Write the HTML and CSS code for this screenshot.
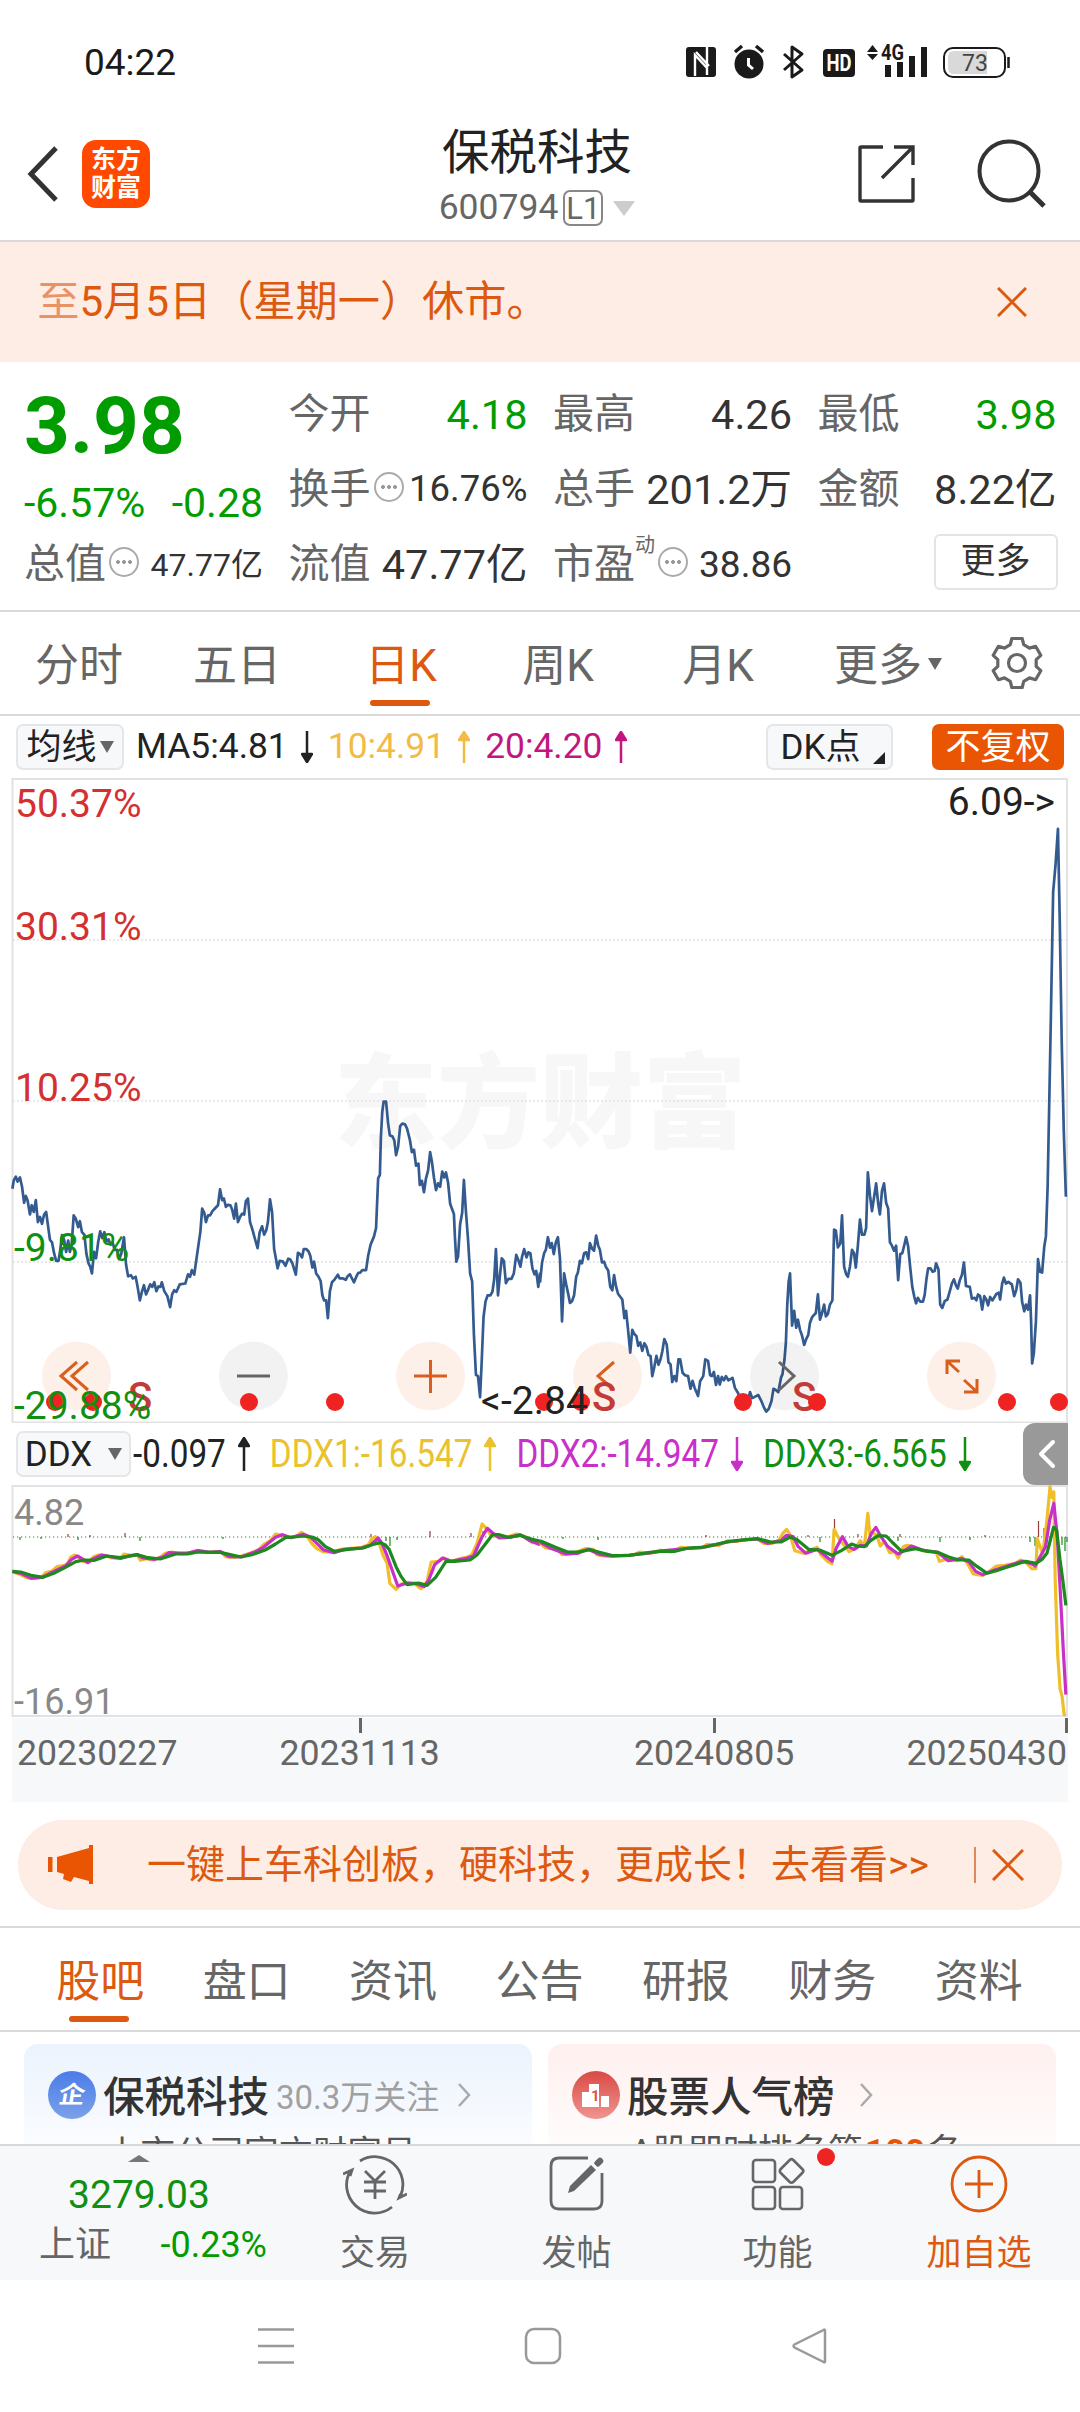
FILE: index.html
```html
<!DOCTYPE html>
<html lang="zh-CN">
<head>
  <meta charset="UTF-8">
  <title>保税科技 600794</title>
  <meta name="viewport" content="width=device-width, initial-scale=1.0">
  <link rel="stylesheet" href="styles.css">
</head>
<body>
  <!-- Status bar -->
  <div class="status-bar">
    <span class="clock">04:22</span>
    <svg class="status-icons" viewBox="670 35 350 60" width="350" height="60">
      <rect x="686" y="47" width="30" height="30" rx="3" fill="#1a1a1a"/>
      <path d="M695 76V55L707 68V75M696 52L709 66M707 47V70" fill="none" stroke="#fff" stroke-width="2.4"/>
      <circle cx="749" cy="64" r="14.5" fill="#1a1a1a"/>
      <path d="M735 52L742 46M756 46L763 52" stroke="#1a1a1a" stroke-width="3.4" fill="none"/>
      <path d="M748.500 58V65L753 69" stroke="#fff" stroke-width="3" fill="none"/>
      <path d="M784 54L802 70L792 77V47L802 54L784 70" stroke="#1a1a1a" stroke-width="3" fill="none" stroke-linejoin="round"/>
      <rect x="823" y="49" width="32" height="28" rx="4" fill="#1a1a1a"/>
      <text x="839" y="71" class="hd" textLength="25" lengthAdjust="spacingAndGlyphs">HD</text>
      <path d="M867 52L872.500 45L878 52ZM867 54L872.500 60L878 54Z" fill="#1a1a1a"/>
      <text x="881" y="60" class="net" textLength="23" lengthAdjust="spacingAndGlyphs">4G</text>
      <path d="M888 65V77M900 62V77M912 56V77M924 47V77" stroke="#1a1a1a" stroke-width="6"/>
      <rect x="944" y="48" width="61" height="29" rx="9" fill="#fff" stroke="#1a1a1a" stroke-width="2"/>
      <path d="M954 51H987V74H954Q948 74 948 68V57Q948 51 954 51Z" fill="#d9d9d9"/>
      <path d="M1008.500 57V68" stroke="#1a1a1a" stroke-width="2.500"/>
      <text x="975" y="71" class="batt">73</text>
    </svg>
  </div>

  <!-- Title bar -->
  <header class="title-bar">
    <svg class="back" viewBox="0 0 34 60" width="34" height="60"><path d="M30 4L5 30L30 56" fill="none" stroke="#333" stroke-width="5"/></svg>
    <div class="app-logo"><span>东方</span><span>财富</span></div>
    <div class="stock">
      <div class="stock-name">保税科技</div>
      <div class="stock-code">600794<span class="level">L1</span><i class="tri-down light"></i></div>
    </div>
    <svg class="share" viewBox="0 0 62 62" width="62" height="62">
      <path d="M27 4H5Q4 4 4 5V57Q4 58 5 58H56Q57 58 57 57V35M38 4H57V22M57 4L26 35" fill="none" stroke="#333" stroke-width="3.400"/>
    </svg>
    <svg class="search" viewBox="0 0 72 72" width="72" height="72">
      <circle cx="33" cy="33" r="29.500" fill="none" stroke="#333" stroke-width="4"/>
      <path d="M54 54L68 68" stroke="#333" stroke-width="5"/>
    </svg>
  </header>

  <!-- Scrolling notice -->
  <div class="notice">
    <span class="notice-text"><span class="faded">）</span><span class="fade-in">至</span>5月5日（星期一）休市。</span>
    <svg viewBox="0 0 30 30" width="30" height="30"><path d="M1 1L29 29M29 1L1 29" stroke="#dd5910" stroke-width="3"/></svg>
  </div>

  <!-- Quote -->
  <section class="quote">
    <div class="last">
      <b>3.98</b>
      <div class="change"><span>-6.57%</span><span>-0.28</span></div>
    </div>
    <div class="cell"><label>今开</label><span class="down">4.18</span></div>
    <div class="cell"><label>最高</label><span>4.26</span></div>
    <div class="cell"><label>最低</label><span class="down">3.98</span></div>
    <div class="cell"><label>换手</label><i class="tip"></i><span class="mid">16.76%</span></div>
    <div class="cell"><label>总手</label><span>201.2万</span></div>
    <div class="cell"><label>金额</label><span>8.22亿</span></div>
    <div class="cell"><label>总值</label><i class="tip"></i><span class="small">47.77亿</span></div>
    <div class="cell"><label>流值</label><span>47.77亿</span></div>
    <div class="cell"><label>市盈</label><sup>动</sup><i class="tip"></i><span class="pe">38.86</span></div>
    <div class="cell last-cell"><button class="more">更多</button></div>
  </section>

  <!-- Period tabs -->
  <nav class="period-tabs">
    <a>分时</a>
    <a>五日</a>
    <a class="active">日K</a>
    <a>周K</a>
    <a>月K</a>
    <a>更多<i class="tri-down"></i></a>
    <a class="settings">
      <svg viewBox="-27 -27 54 54" width="54" height="54">
        <path d="M-6.700 -18.300L-5.200 -24.500H5.200L6.700 -18.300L12.500 -14.900L18.600 -16.700L23.800 -7.700L19.200 -3.400V3.400L23.800 7.700L18.600 16.700L12.500 14.900L6.700 18.300L5.200 24.500H-5.200L-6.700 18.300L-12.500 14.900L-18.600 16.700L-23.800 7.700L-19.200 3.400V-3.400L-23.800 -7.700L-18.600 -16.700L-12.500 -14.900Z" fill="none" stroke="#666" stroke-width="3.200" stroke-linejoin="round"/>
        <circle r="8.500" fill="none" stroke="#666" stroke-width="3.200"/>
      </svg>
    </a>
  </nav>

  <!-- Moving averages -->
  <div class="ma-row">
    <span class="pill">均线<i class="tri-down"></i></span>
    <span class="ma ma5">MA5:4.81<svg class="arrow flip" viewBox="0 0 12 32" width="12" height="32"><path d="M6 3V32M1 9L6 1L11 9Z"/></svg></span>
    <span class="ma ma10">10:4.91<svg class="arrow" viewBox="0 0 12 32" width="12" height="32"><path d="M6 3V32M1 9L6 1L11 9Z"/></svg></span>
    <span class="ma ma20">20:4.20<svg class="arrow" viewBox="0 0 12 32" width="12" height="32"><path d="M6 3V32M1 9L6 1L11 9Z"/></svg></span>
    <span class="pill dk">DK点<i class="corner"></i></span>
    <span class="pill adjust">不复权</span>
  </div>

  <!-- Price chart -->
  <svg class="price-chart" viewBox="0 778 1080 645" width="1080" height="645">
    <text x="334" y="1140" class="watermark" textLength="412">东方财富</text>
    <path d="M12.500 1422.500V779H1067V1422.500Z" class="frame"/>
    <path d="M13 940H1067M13 1101H1067M13 1262H1067" class="grid"/>
    <g transform="translate(0 770) scale(.34439 .42092)" class="line price">
      <polyline points="36,995 40,975 46,966 51,978 58,968 64,990 70,1028 75,1012 80,1022 87,1056 92,1034 98,1050 104,1022 110,1074 116,1062 122,1078 128,1056 134,1050 139,1080 145,1116 151,1122 157,1148 163,1166 170,1166 175,1140 180,1105 186,1116 192,1145 198,1118 203,1145 208,1128 214,1058 220,1066 227,1086 232,1072 238,1098 245,1104 251,1150 257,1172 262,1180 267,1196 273,1145 279,1160 285,1122 291,1096 297,1112 303,1098 309,1120 315,1115 321,1128 327,1122 333,1140 340,1140 346,1162 352,1150 360,1110 366,1175 372,1203 380,1200 386,1208 394,1204 400,1230 406,1260 412,1240 418,1224 424,1246 430,1235 436,1222 442,1228 448,1217 454,1238 460,1227 466,1228 470,1217 477,1238 486,1250 494,1276 500,1245 506,1236 512,1240 522,1222 538,1220 546,1198 552,1204 557,1188 564,1199 570,1164 576,1130 582,1096 587,1042 593,1052 598,1074 604,1058 610,1058 617,1048 626,1040 633,1034 639,996 645,1022 650,1018 656,1038 662,1033 669,1034 674,1044 680,1066 685,1030 691,1074 697,1062 703,1054 709,1056 714,1024 720,1018 726,1074 733,1092 741,1116 748,1136 754,1098 761,1084 767,1104 773,1094 778,1074 784,1020 790,1050 796,1138 801,1160 806,1184 812,1166 821,1167 829,1178 837,1161 843,1163 849,1172 859,1199 865,1147 870,1149 877,1158 882,1138 889,1138 896,1144 901,1154 907,1182 912,1168 918,1196 925,1204 931,1214 936,1248 941,1260 947,1260 952,1302 958,1238 964,1217 972,1210 981,1199 986,1208 996,1208 1004,1211 1010,1202 1016,1198 1022,1208 1028,1217 1034,1205 1040,1195 1046,1194 1052,1188 1063,1188 1069,1154 1076,1128 1086,1108 1092,1088 1098,970 1103,962 1106,872 1110,812 1114,788 1121,788 1127,840 1132,868 1139,870 1145,880 1150,915 1156,895 1162,846 1168,840 1176,842 1182,852 1190,878 1196,908 1202,902 1208,940 1215,935 1219,986 1225,976 1231,1003 1237,970 1243,952 1249,908 1254,930 1260,968 1266,998 1272,982 1278,990 1284,954 1290,968 1295,956 1301,980 1307,1030 1312,1042 1318,1055 1321,1110 1325,1168 1330,1156 1336,1080 1342,1052 1347,974 1353,1050 1359,1115 1365,1196 1371,1215 1376,1340 1382,1437 1388,1440 1394,1490 1399,1400 1404,1300 1410,1262 1416,1248 1424,1248 1430,1239 1435,1210 1440,1138 1446,1248 1452,1198 1457,1160 1463,1166 1469,1219 1476,1209 1485,1209 1492,1196 1499,1152 1505,1164 1511,1180 1516,1156 1522,1138 1529,1158 1534,1146 1540,1148 1546,1184 1552,1198 1557,1190 1563,1228 1568,1194"/>
    </g>
    <g transform="translate(540 770) scale(.34439 .42092)" class="line price">
      <polyline points="0,1218 6,1170 12,1148 17,1140 23,1110 29,1135 34,1124 40,1150 46,1122 52,1110 58,1160 64,1310 70,1196 76,1222 82,1245 87,1266 93,1262 99,1248 105,1204 110,1194 116,1166 122,1172 128,1148 134,1146 140,1162 145,1124 151,1137 157,1142 163,1106 169,1130 174,1140 180,1170 186,1168 191,1180 198,1189 204,1228 210,1236 215,1200 221,1228 227,1245 239,1258 245,1302 250,1285 255,1324 262,1384 268,1330 274,1340 280,1345 285,1368 291,1360 297,1380 303,1362 309,1370 315,1390 321,1392 326,1440 332,1418 338,1392 344,1413 350,1400 355,1382 361,1352 368,1365 373,1407 379,1412 384,1454 390,1440 396,1452 402,1400 407,1400 414,1432 421,1438 430,1440 437,1470 443,1451 449,1468 459,1487 465,1452 474,1440 480,1400 488,1404 494,1438 499,1440 505,1430 511,1461 517,1440 522,1460 528,1442 534,1450 540,1440 547,1450 559,1444 566,1468 575,1480 582,1495 590,1500 597,1510 603,1500 610,1478 616,1492 622,1490 634,1485 642,1498 650,1514 657,1524 664,1518 672,1500 678,1470 686,1474 692,1478 700,1443 704,1436 710,1400 714,1360 718,1270 722,1215 726,1196 732,1320 738,1285 744,1325 749,1306 755,1330 761,1344 767,1366 773,1352 779,1342 784,1313 790,1300 801,1290 807,1246 813,1306 819,1290 825,1270 830,1298 836,1292 842,1270 849,1260 854,1092 859,1094 865,1134 872,1125 877,1058 883,1180 889,1198 894,1204 900,1180 906,1140 912,1148 917,1182 923,1130 929,1068 935,1104 942,1104 947,1088 952,956 958,1010 964,1048 970,1015 976,982 982,1030 987,1056 993,1000 999,982 1005,1028 1011,1042 1016,1122 1022,1130 1028,1142 1034,1130 1040,1212 1046,1150 1052,1148 1058,1128 1063,1110 1069,1132 1075,1182 1081,1228 1087,1252 1092,1267 1097,1254 1104,1263 1112,1263 1117,1247 1122,1210 1127,1184 1134,1184 1140,1192 1146,1190 1150,1172 1157,1186 1162,1270 1168,1278 1175,1262 1183,1258 1190,1238 1196,1220 1202,1210 1208,1225 1213,1232 1219,1212 1225,1200 1231,1170 1237,1226 1248,1228 1254,1256 1262,1254 1267,1260 1272,1246 1278,1250 1284,1282 1290,1250 1296,1258 1301,1272 1307,1252 1314,1260 1325,1245 1332,1242 1336,1258 1342,1220 1347,1206 1353,1220 1360,1216 1370,1222 1377,1250 1383,1235 1388,1210 1395,1218 1400,1264 1406,1286 1411,1270 1417,1282 1423,1248 1426,1310 1429,1410 1434,1385 1440,1310 1446,1162 1452,1192 1458,1194 1464,1134 1469,1108 1474,990 1482,650 1490,290 1497,225 1504,140 1509,350 1515,650 1521,860 1527,1014"/>
    </g>
    <!-- Toolbar buttons -->
    <g class="tool">
      <circle cx="76.500" cy="1376" r="34.500"/><path d="M77 1362L61 1376L77 1390M88 1362L72 1376L88 1390"/>
      <circle cx="430.500" cy="1376" r="34.500"/><path d="M414 1376H447M430.500 1360V1393"/>
      <circle cx="607.500" cy="1376" r="34.500"/><path d="M614 1362L598 1376L614 1390"/>
      <circle cx="961.500" cy="1376" r="34.500"/><path d="M960 1361H947V1374M947 1361L959 1372M964 1380L977 1392M964 1392H977V1379"/>
    </g>
    <g class="tool gray">
      <circle cx="253.500" cy="1376" r="34.500"/><path d="M237 1376H270"/>
      <circle cx="784.500" cy="1376" r="34.500"/><path d="M779 1362L794 1376L779 1390"/>
    </g>
    <!-- Event markers -->
    <g class="mark">
      <text x="128" y="1411">S</text><text x="592" y="1411">S</text><text x="792" y="1411">S</text>
      <circle cx="55" cy="1402" r="9"/><circle cx="93" cy="1402" r="9"/><circle cx="249" cy="1402" r="9"/><circle cx="335" cy="1402" r="9"/>
      <circle cx="544" cy="1402" r="9"/><circle cx="581" cy="1402" r="9"/><circle cx="743" cy="1402" r="9"/><circle cx="817" cy="1402" r="9"/>
      <circle cx="1007" cy="1402" r="9"/><circle cx="1059" cy="1402" r="9"/>
    </g>
    <g class="axis">
      <text x="15" y="817" class="up">50.37%</text>
      <text x="15" y="940" class="up">30.31%</text>
      <text x="15" y="1101" class="up">10.25%</text>
      <text x="14" y="1261" class="dn">-9.81%</text>
      <text x="14" y="1419" class="dn">-29.88%</text>
      <text x="1055" y="815" text-anchor="end">6.09-&gt;</text>
      <text x="481" y="1414" textLength="107">&lt;-2.84</text>
    </g>
  </svg>

  <!-- DDX row -->
  <div class="ddx-row">
    <span class="pill">DDX<i class="tri-down"></i></span>
    <span class="ddx v0"><em>-0.097</em><svg class="arrow" viewBox="0 0 12 34" width="12" height="34"><path d="M6 3V34M1 9L6 1L11 9Z"/></svg></span>
    <span class="ddx v1"><em>DDX1:-16.547</em><svg class="arrow" viewBox="0 0 12 34" width="12" height="34"><path d="M6 3V34M1 9L6 1L11 9Z"/></svg></span>
    <span class="ddx v2"><em>DDX2:-14.947</em><svg class="arrow flip" viewBox="0 0 12 34" width="12" height="34"><path d="M6 3V34M1 9L6 1L11 9Z"/></svg></span>
    <span class="ddx v3"><em>DDX3:-6.565</em><svg class="arrow flip" viewBox="0 0 12 34" width="12" height="34"><path d="M6 3V34M1 9L6 1L11 9Z"/></svg></span>
    <span class="drawer"><svg viewBox="0 0 18 30" width="18" height="30"><path d="M15 3L3 15L15 27" fill="none" stroke="#fff" stroke-width="4" stroke-linecap="round" stroke-linejoin="round"/></svg></span>
  </div>

  <!-- DDX chart -->
  <svg class="ddx-chart" viewBox="0 1485 1080 233" width="1080" height="233">
    <path d="M12.500 1716V1486H1067V1716Z" class="frame"/>
    <path d="M13 1537H1067" stroke="#1c8a1c" stroke-width="1.200" stroke-dasharray="1.200 2.800"/>
    <path d="M20 1537v3M41 1537v2M78 1537v3M140 1537v4M223 1537v2M390 1537v9M386 1537v4M397 1537v3M563 1537v2M598 1537v3M820 1537v5M898 1537v4M940 1537v5M970 1537v3M1030 1537v5M1035 1537v9M1058 1537v6M1062 1537v8M1065 1537v14M1067 1537v5" stroke="#1c8a1c" stroke-width="1.200"/>
    <path d="M68 1537v-3M125 1537v-4M90 1537v-2M371 1537v-3M430 1537v-6M471 1537v-4M483 1537v-6M706 1537v-2M808 1537v-2M858 1537v-3M834.500 1537v-18M900 1537v-3M985 1537v-2M1038.500 1537v-16M1044 1537v-9" stroke="#93403a" stroke-width="1.200"/>
    <g transform="translate(0 1420) scale(.34439 .33333)" class="line">
      <polyline class="c1" points="36,455 55,462 80,474 105,474 122,470 133,458 150,454 165,440 185,437 196,432 205,412 216,405 228,412 240,424 255,426 270,412 285,405 305,406 325,414 350,415 360,402 380,406 398,404 408,421 425,416 445,420 465,412 480,400 500,396 530,402 560,396 575,391 600,398 640,394 655,410 680,412 700,408 725,400 750,390 765,374 785,362 800,342 820,346 840,352 862,348 875,337 890,346 905,370 920,386 940,396 965,396 990,388 1020,385 1050,382 1070,374 1080,356 1090,350 1100,366 1112,405 1124,430 1132,490 1150,508 1165,492 1185,487 1205,492 1222,506 1240,485 1252,426 1275,424 1288,414 1310,424 1335,416 1355,412 1370,404 1385,370 1400,312 1412,325 1425,345 1450,352 1475,350 1500,342 1520,348 1545,368 1568,368"/>
      <polyline class="c2" points="36,454 60,460 90,475 122,472 150,457 190,438 208,418 225,408 238,416 255,428 272,416 295,405 325,411 350,415 375,408 398,404 415,414 450,418 475,410 490,398 515,399 545,399 575,392 610,397 640,395 665,410 700,411 740,396 765,382 800,352 820,344 845,353 880,343 900,350 920,370 940,390 970,398 1000,388 1050,384 1075,376 1098,354 1110,372 1125,410 1155,498 1180,490 1205,490 1232,500 1245,480 1262,434 1285,414 1310,424 1350,416 1375,408 1400,350 1415,325 1430,338 1450,354 1480,352 1510,344 1535,360 1568,374"/>
      <polyline class="c3" points="36,454 60,456 90,466 125,472 160,458 190,442 220,425 245,420 275,421 310,408 350,413 400,404 425,412 465,417 510,402 545,402 575,396 640,397 700,411 735,403 770,390 800,372 830,352 855,351 880,348 910,352 925,360 945,380 972,394 1010,388 1055,384 1080,374 1104,368 1118,374 1130,388 1150,440 1165,470 1182,494 1215,489 1240,496 1265,472 1295,424 1320,424 1365,420 1385,405 1405,378 1430,344 1450,344 1475,352 1510,346 1545,358 1568,363"/>
    </g>
    <g transform="translate(540 1420) scale(.34439 .33333)" class="line">
      <polyline class="c1" points="0,368 15,384 35,386 55,392 64,404 85,402 105,397 130,386 155,388 165,404 200,410 240,408 270,405 290,396 320,400 350,390 380,396 410,382 440,386 470,384 485,373 520,376 545,362 570,364 600,358 630,356 650,370 675,370 695,360 705,340 716,328 726,344 740,392 765,400 790,388 805,382 815,404 835,424 848,432 854,328 864,348 872,362 885,378 898,395 915,386 930,362 942,378 952,280 958,345 968,340 978,346 988,378 1000,364 1015,398 1030,395 1040,414 1055,380 1065,376 1085,380 1110,392 1150,396 1160,424 1185,416 1210,422 1225,410 1240,428 1258,462 1285,466 1305,454 1325,438 1350,436 1380,430 1395,420 1410,425 1428,446 1440,446 1444,356 1452,380 1460,400 1472,300 1481,200 1486,232 1492,216 1496,480 1503,700 1510,805 1516,830 1522,884 1527,884"/>
      <polyline class="c2" points="0,366 30,384 75,402 110,400 140,388 175,404 210,408 260,405 310,400 360,392 410,387 470,382 510,374 545,366 590,360 632,357 660,370 700,362 715,346 735,350 750,380 772,400 805,388 825,405 848,424 860,385 878,350 895,380 912,388 930,376 948,378 962,340 975,322 990,350 1010,380 1040,402 1060,390 1078,378 1110,390 1155,397 1185,422 1225,416 1245,425 1265,454 1285,464 1320,450 1350,440 1400,424 1425,430 1438,438 1455,405 1468,380 1480,300 1492,250 1502,350 1511,520 1520,700 1527,824"/>
      <polyline class="c3" points="0,362 45,382 80,396 110,396 145,389 170,396 210,407 260,406 320,397 350,394 390,394 430,384 480,381 540,366 570,362 632,356 670,366 700,366 725,352 745,358 780,388 812,390 848,406 875,392 905,372 920,378 942,380 960,362 982,347 1005,348 1022,366 1050,394 1090,386 1125,394 1155,397 1185,410 1215,420 1245,420 1270,440 1298,460 1325,452 1355,442 1410,424 1440,430 1458,418 1472,400 1482,360 1491,322 1500,330 1510,420 1518,480 1527,556"/>
    </g>
    <g class="ddx-axis">
      <text x="14" y="1525">4.82</text>
      <text x="14" y="1714">-16.91</text>
    </g>
  </svg>

  <div class="dates">
    <span>20230227</span>
    <span class="tick">20231113</span>
    <span class="tick">20240805</span>
    <span class="tick end">20250430</span>
  </div>

  <!-- Promo -->
  <div class="promo">
    <svg viewBox="0 0 46 40" width="46" height="40">
      <path d="M1 12H5.500V27H1ZM10 12L42 3V0H46V39H42V36L27 32L24 37L16 34L17 29L10 27Z" fill="#ea5504"/>
    </svg>
    <span class="promo-text">一键上车科创板，硬科技，更成长！去看看&gt;&gt;</span>
    <i class="bar"></i>
    <svg viewBox="0 0 32 32" width="32" height="32"><path d="M1 1L31 31M31 1L1 31" stroke="#dd5910" stroke-width="3"/></svg>
  </div>

  <!-- Info tabs -->
  <nav class="info-tabs">
    <a class="active">股吧</a>
    <a>盘口</a>
    <a>资讯</a>
    <a>公告</a>
    <a>研报</a>
    <a>财务</a>
    <a>资料</a>
  </nav>

  <section class="cards">
    <div class="card blue">
      <div class="card-head">
        <span class="badge"><em>企</em></span>
        <b>保税科技</b>
        <small>30.3万关注</small>
        <svg viewBox="0 0 14 26" width="14" height="26"><path d="M2 2L12 13L2 24" fill="none" stroke="#aaa" stroke-width="2.500"/></svg>
      </div>
      <p>上市公司官方财富号</p>
    </div>
    <div class="card red">
      <div class="card-head">
        <span class="badge">
          <svg viewBox="0 0 30 26" width="30" height="26"><path d="M1 25V10H8V2H18V25ZM20 25V14H28V25Z" fill="#fff"/><text x="10" y="19">1</text></svg>
        </span>
        <b>股票人气榜</b>
        <svg viewBox="0 0 14 26" width="14" height="26"><path d="M2 2L12 13L2 24" fill="none" stroke="#aaa" stroke-width="2.500"/></svg>
      </div>
      <p>A股即时排名第<strong>100</strong>名</p>
    </div>
  </section>

  <!-- Bottom bar -->
  <footer class="bottom-bar">
    <div class="index">
      <i class="tri-up"></i>
      <div class="index-value">3279.03</div>
      <div class="index-row"><span>上证</span><span class="down">-0.23%</span></div>
    </div>
    <div class="item">
      <svg viewBox="-32 -32 64 64" width="64" height="64" fill="none" stroke="#666" stroke-width="2.800">
        <path d="M-15 -23A28 28 0 0 1 25.500 12M25.500 10L24 14L32 10"/>
        <path d="M17 23A28 28 0 0 1 -24 -14M-32 -10L-23 -14L-25 -8"/>
        <path d="M-10 -13L0 -3L10 -13M-11 -2H11M-11 7H11M0 -3V15"/>
      </svg>
      <span>交易</span>
    </div>
    <div class="item">
      <svg viewBox="-32 -32 64 64" width="64" height="64">
        <path d="M11 -26H-18Q-26 -26 -26 -18V17Q-26 25 -18 25H17Q25 25 25 17V-11" fill="none" stroke="#666" stroke-width="2.800"/>
        <path d="M-9 9L-7 2L14 -19L19 -14L-3 7Z" fill="#666"/>
        <path d="M20.500 -20.500L23 -23" stroke="#666" stroke-width="6.500" stroke-linecap="round"/>
        <path d="M14 -22L21 -15" stroke="#f7f8fa" stroke-width="2"/>
      </svg>
      <span>发帖</span>
    </div>
    <div class="item">
      <svg viewBox="-32 -32 64 64" width="64" height="64" fill="none" stroke="#666" stroke-width="2.600">
        <rect x="-25" y="-24" width="22" height="22" rx="3"/>
        <rect x="-25" y="3" width="22" height="22" rx="3"/>
        <rect x="2" y="3" width="22" height="22" rx="3"/>
        <rect x="4.500" y="-22" width="18" height="18" rx="2.500" transform="rotate(45 13.500 -13)"/>
      </svg>
      <i class="dot"></i>
      <span>功能</span>
    </div>
    <div class="item add">
      <svg viewBox="-32 -32 64 64" width="64" height="64" fill="none" stroke="#dd5910" stroke-width="2.800">
        <circle r="27"/>
        <path d="M-14 0H14M0 -14V14"/>
      </svg>
      <span>加自选</span>
    </div>
  </footer>

  <!-- System navigation -->
  <div class="sys-nav">
    <svg viewBox="0 0 40 40" width="40" height="40"><path d="M2 3.500H38M2 20H38M2 36.500H38"/></svg>
    <svg viewBox="0 0 40 40" width="40" height="40"><rect x="3" y="3" width="34" height="34" rx="8"/></svg>
    <svg viewBox="0 0 40 40" width="40" height="40"><path d="M35 4.500V35.500Q35 37 33.500 36L4.500 21.500Q2.500 20 4.500 18.500L33.500 4Q35 3 35 4.500Z"/></svg>
  </div>
</body>
</html>
```
FILE: styles.css
```css
/* Base */
* { box-sizing: border-box; }
body {
  margin: 0;
  width: 1080px;
  height: 2412px;
  overflow: hidden;
  background: #fff;
  color: #333;
  font-family: Roboto, "Noto Sans CJK SC", sans-serif;
  font-size: 41.500px;
  line-height: 1;
}
svg { display: block; flex: none; }
i, em { font-style: normal; }
.down { color: #009c00; }

/* Small triangles */
.tri-down {
  display: inline-block;
  border: 7px solid transparent;
  border-top: 12px solid #666;
  border-bottom: 0;
}
.tri-down.light {
  border-width: 15px 11px 0;
  border-top-color: #ccc;
}
.tri-up {
  border: 11px solid transparent;
  border-bottom: 7px solid #777;
  border-top: 0;
}

/* Status bar */
.status-bar {
  height: 115px;
  padding: 35px 60px 0 84px;
  display: flex;
  justify-content: space-between;
}
.clock {
  font-size: 37px;
  line-height: 55px;
  color: #1a1a1a;
}
.hd {
  font: bold 23px Roboto;
  fill: #fff;
  text-anchor: middle;
}
.net { font: bold 22px Roboto; fill: #1a1a1a; }
.batt { font: 23px Roboto; fill: #444; text-anchor: middle; }

/* Title bar */
.title-bar {
  height: 127px;
  border-bottom: 2px solid #d9d9d9;
  display: flex;
  align-items: center;
  padding: 0 32px 7px 26px;
}
.app-logo {
  width: 68px;
  height: 68px;
  margin-left: 22px;
  border-radius: 14px;
  background: #ff4800;
  color: #fff;
  display: flex;
  flex-direction: column;
  align-items: center;
  justify-content: center;
  font-size: 25px;
  font-weight: 700;
  line-height: 28px;
}
.stock {
  flex: 1;
  margin-left: 68px;
  padding-top: 8px;
  text-align: center;
}
.stock-name {
  font-size: 47.500px;
  line-height: 60px;
  color: #222;
}
.stock-code {
  display: flex;
  align-items: center;
  justify-content: center;
  height: 50px;
  font-size: 35.500px;
  color: #666;
}
.level {
  width: 40px;
  height: 36px;
  margin: 0 10px 0 5px;
  border: 2px solid #888;
  border-radius: 7px;
  font-size: 31px;
  line-height: 33px;
}
.share { margin-right: 58px; }

/* Notice */
.notice {
  height: 120px;
  padding: 0 53px 0 0;
  background: #fdede4;
  color: #dd5910;
  display: flex;
  align-items: center;
  justify-content: space-between;
  font-size: 42.200px;
  overflow: hidden;
}
.faded { margin-left: -15px; margin-right: 10px; opacity: .25; }
.fade-in { opacity: .6; }

/* Quote grid */
.quote {
  height: 250px;
  padding: 15px 23px 0 24px;
  border-bottom: 2px solid #d9d9d9;
  display: grid;
  grid-template-columns: 239px 239px 239px 239px;
  grid-template-rows: 75px 75px 75px;
  column-gap: 25.500px;
}
.last {
  grid-row: span 2;
  color: #009c00;
}
.last b {
  display: block;
  font-size: 80px;
  font-weight: 700;
  line-height: 98px;
}
.change {
  display: flex;
  justify-content: space-between;
  font-size: 41px;
  line-height: 56px;
}
.cell {
  display: flex;
  align-items: center;
  position: relative;
}
.cell label { color: #666; white-space: nowrap; font-size: 41px; }
.cell span { margin-left: auto; white-space: nowrap; }
.cell .mid { font-size: 36.500px; }
.cell .small { font-size: 32px; }
.cell .pe { font-size: 37px; }
.cell sup {
  width: 20px;
  font-size: 20px;
  color: #666;
  align-self: flex-start;
  padding-top: 8px;
}
.tip {
  width: 30px;
  height: 30px;
  margin-left: 3px;
  margin-bottom: 6px;
  border: 2px solid #aaa;
  border-radius: 50%;
  background: radial-gradient(circle, #999 1.700px, transparent 2.200px) center / 6px 26px repeat-x content-box;
  padding: 0 4px;
}
.last-cell { justify-content: flex-end; }
.more {
  width: 124px;
  height: 56px;
  margin-right: -1px;
  margin-bottom: 6px;
  padding: 0;
  border: 2px solid #e4e4e4;
  border-radius: 6px;
  background: #fff;
  color: #333;
  font: 35px/50px Roboto, "Noto Sans CJK SC", sans-serif;
}

/* Period tabs */
.period-tabs {
  height: 104px;
  border-bottom: 2px solid #d9d9d9;
  display: grid;
  grid-template-columns: 158px 158px 170px 144px 176px 164px 94px;
  font-size: 44px;
  color: #666;
}
.period-tabs a {
  display: flex;
  align-items: center;
  justify-content: center;
  position: relative;
  padding-top: 5px;
}
.period-tabs .settings { padding-top: 0; }
.period-tabs .tri-down { margin: 0 0 4px 6px; }
.active { color: #dd5910; }
.active::after {
  content: "";
  position: absolute;
  bottom: 8px;
  left: 50%;
  width: 60px;
  height: 6px;
  margin-left: -31px;
  border-radius: 3px;
  background: #dd5910;
}

/* Indicator rows */
.ma-row, .ddx-row {
  display: flex;
  align-items: center;
}
.ma-row {
  height: 62px;
  padding: 0 16px;
  font-size: 35.400px;
}
.pill {
  display: flex;
  align-items: center;
  justify-content: center;
  height: 46px;
  border: 2px solid #e4e6e9;
  border-radius: 7px;
  background: #f7f8fa;
  color: #222;
  font-size: 35px;
  position: relative;
}
.ma-row .pill { width: 108px; }
.ma-row .pill .tri-down { margin-left: 3px; }
.ma { display: flex; align-items: center; }
.ma svg { margin-left: 13px; }
.ma5 { color: #222; margin-left: 12px; }
.ma10 { color: #f3bb45; margin-left: 15px; }
.ma20 { color: #c3157f; margin-left: 15px; }
.arrow { fill: currentColor; stroke: currentColor; stroke-width: 2.500px; }
.arrow path { stroke-linejoin: round; }
.flip { transform: rotate(180deg); }
.ma-row .dk {
  width: 127px;
  margin-left: auto;
  padding-right: 18px;
}
.corner {
  position: absolute;
  right: 6px;
  bottom: 4px;
  border-left: 12px solid transparent;
  border-bottom: 12px solid #222;
}
.ma-row .adjust {
  width: 132px;
  margin-left: 39px;
  border: 0;
  background: #ea5504;
  color: #fff;
}

/* Charts */
.frame { fill: none; stroke: #e2e2e2; stroke-width: 2; }
.grid { stroke: #e2e2e2; stroke-width: 1.500; stroke-dasharray: 2 2; }
.watermark {
  font: 900 103px "Noto Sans CJK SC", sans-serif;
  fill: #f7f7f7;
}
.line polyline {
  fill: none;
  stroke-width: 3.200px;
  vector-effect: non-scaling-stroke;
  stroke-linejoin: round;
}
.price polyline { stroke: #345b8f; stroke-width: 2.700px; }
.line .c1 { stroke: #f0be28; }
.line .c2 { stroke: #c92fc9; }
.line .c3 { stroke: #1c8a1c; }
.tool circle { fill: #ea5504; opacity: .09; }
.tool path { fill: none; stroke: #d95f1e; stroke-width: 3; }
.tool.gray circle { fill: #000; opacity: .05; }
.tool.gray path { stroke: #666; }
.mark circle { fill: #f02323; }
.mark text { font: 500 40px Roboto; fill: #c43a36; }
.axis text { font: 39px Roboto; fill: #222; }
.axis .up { fill: #d43030; }
.axis .dn { fill: #109010; }
.ddx-axis text { font: 36px Roboto; fill: #888; }

.ddx-row {
  height: 62px;
  padding-left: 16px;
  font-size: 33.300px;
}
.ddx-row .pill { width: 115px; gap: 16px; }
.ddx { display: flex; align-items: center; }
.ddx em { transform: scaleY(1.150); }
.ddx svg { margin-left: 12px; }
.v0 { color: #222; margin-left: 2px; }
.v1 { color: #eac12f; margin-left: 20px; }
.v2 { color: #c92fc9; margin-left: 20px; }
.v3 { color: #109010; margin-left: 20px; }
.drawer {
  width: 45px;
  height: 62px;
  margin: 0 12px 0 auto;
  padding-left: 15px;
  border-radius: 12px 0 0 12px;
  background: #999;
  display: flex;
  align-items: center;
}

/* Dates */
.dates {
  height: 84px;
  margin: 0 12px;
  padding: 0 1px 12px 5px;
  background: #f7f8fa;
  color: #666;
  display: flex;
  align-items: center;
  font-size: 35.700px;
}
.tick { position: relative; }
.tick::before {
  content: "";
  position: absolute;
  left: 50%;
  top: -18px;
  width: 3px;
  height: 15px;
  margin-left: -1px;
  background: #666;
}
.tick.end::before { left: auto; right: -1px; }
.dates span:nth-child(2) { margin-left: 102px; }
.dates span:nth-child(3) { margin-left: 194px; }
.dates span:nth-child(4) { margin-left: auto; }

/* Promo */
.promo {
  height: 90px;
  margin: 18px 18px 16px;
  padding: 0 38px 0 29px;
  border-radius: 45px;
  background: #fdede4;
  color: #dd5910;
  display: flex;
  align-items: center;
  font-size: 39px;
}
.promo-text { margin-left: 54px; white-space: nowrap; }
.bar {
  width: 2px;
  height: 36px;
  margin: 0 16px 0 auto;
  background: #dd8a5c;
}

/* Info tabs */
.info-tabs {
  height: 106px;
  padding: 0 28px 0 27px;
  border-top: 2px solid #d9d9d9;
  border-bottom: 2px solid #d9d9d9;
  display: flex;
  font-size: 44px;
  color: #666;
}
.info-tabs a {
  flex: 1;
  display: flex;
  align-items: center;
  justify-content: center;
  position: relative;
  padding-top: 6px;
}
.info-tabs .active { color: #dd5910; }

/* Cards */
.cards {
  height: 112px;
  padding: 12px 24px 0;
  display: grid;
  grid-template-columns: 508px 508px;
  gap: 16px;
  overflow: hidden;
}
.card {
  height: 160px;
  padding: 26px 24px 0;
  border-radius: 14px;
}
.card.blue { background: linear-gradient(#ebf3fd, #fff 130px); }
.card.red { background: linear-gradient(#fef0ef, #fff 130px); }
.card-head { display: flex; align-items: center; height: 50px; }
.card-head b { margin: 5px 0 0 7px; font-size: 41.500px; font-weight: 500; line-height: 50px; }
.card-head small { margin: 5px 0 0 7px; font-size: 33px; color: #a0a0a0; }
.card-head > svg { margin-left: 18px; }
.card.red .card-head > svg { margin-left: 24px; }
.badge {
  width: 48px;
  height: 48px;
  border-radius: 50%;
  background: linear-gradient(#4b7ce8, #7ba1ea);
  color: #fff;
  display: flex;
  align-items: center;
  justify-content: center;
  font-size: 24px;
  font-weight: 700;
}
.badge em { transform: scaleX(1.100) skewX(-8deg); }
.red .badge { background: linear-gradient(#d94a45, #f09490); }
.badge text { font: bold 15px Roboto; fill: #d9534e; }
.card p {
  margin: 15px 0 0 58px;
  font-size: 34.500px;
  line-height: 36px;
  color: #555;
}
.card.red p { font-size: 35px; }
.card strong { color: #ea5504; margin: 0 2px; }

/* Bottom bar */
.bottom-bar {
  height: 136px;
  border-top: 2px solid #d5d8dc;
  background: #f7f8fa;
  display: grid;
  grid-template-columns: 274px 202px 201px 201px 202px;
  color: #666;
  font-size: 35px;
}
.index {
  display: flex;
  flex-direction: column;
  align-items: center;
  padding: 9px 0 0 4px;
}
.index-value { margin-top: 14px; font-size: 39px; color: #109010; }
.index-row {
  width: 228px;
  margin: 12px 0 0 28px;
  display: flex;
  align-items: center;
  justify-content: space-between;
  font-size: 36px;
}
.item {
  display: flex;
  flex-direction: column;
  align-items: center;
  padding-top: 6px;
  position: relative;
}
.item span { margin-top: 20px; }
.dot {
  position: absolute;
  left: 140px;
  top: 2px;
  width: 18px;
  height: 18px;
  border-radius: 50%;
  background: #f02323;
}
.add { color: #dd5910; }

/* System navigation */
.sys-nav {
  height: 132px;
  padding: 0 250px 0 256px;
  display: flex;
  align-items: center;
  justify-content: space-between;
}
.sys-nav svg { fill: none; stroke: #999; stroke-width: 2.500px; }
```
